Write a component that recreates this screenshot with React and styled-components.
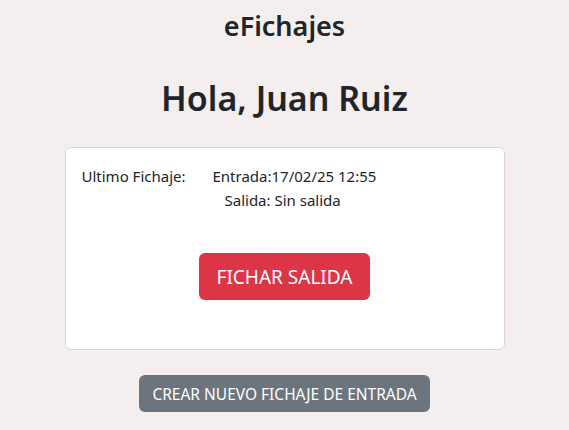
import styled, { createGlobalStyle } from "styled-components";

const GlobalStyle = createGlobalStyle`
  body {
    margin: 0;
    background: #f5eeee;
    font-family: "Noto Sans", "Open Sans", sans-serif;
    color: #212529;
  }
`;

const Page = styled.div`
  display: flex;
  flex-direction: column;
  align-items: center;
  padding-top: 6px;
`;

const Brand = styled.h2`
  margin: 0;
  font-size: 27px;
  font-weight: 600;
  line-height: 40px;
`;

const Greeting = styled.h1`
  margin: 28px 0 0;
  font-size: 34px;
  font-weight: 600;
  line-height: 48px;
`;

const Card = styled.div`
  box-sizing: border-box;
  width: 440px;
  margin-top: 25px;
  padding: 16px 16px 49px;
  background: #fff;
  border: 1px solid #d8d8d8;
  border-radius: 6px;
  display: flex;
  flex-direction: column;
  align-items: center;
`;

const Info = styled.div`
  align-self: stretch;
  display: grid;
  grid-template-columns: 131px auto;
  font-size: 15px;
  line-height: 24px;
`;

const Label = styled.span``;

const Value = styled.span`
  padding-left: ${(p) => p.$indent || 0}px;
`;

const Button = styled.button`
  border: none;
  border-radius: 6px;
  color: #fff;
  font-family: inherit;
  cursor: pointer;
  background: ${(p) => (p.$variant === "danger" ? "#dc3545" : "#6c757d")};
  font-size: ${(p) => (p.$size === "lg" ? "19px" : "15.5px")};
  padding: ${(p) => (p.$size === "lg" ? "0 18px" : "0 13px")};
  height: ${(p) => (p.$size === "lg" ? "47px" : "37px")};
`;

const MainAction = styled(Button)`
  margin-top: 41px;
`;

const SecondaryAction = styled(Button)`
  margin-top: 25px;
`;

export default function App() {
  return (
    <>
      <GlobalStyle />
      <Page>
        <Brand>eFichajes</Brand>
        <Greeting>Hola, Juan Ruiz</Greeting>
        <Card>
          <Info>
            <Label>Ultimo Fichaje:</Label>
            <Value>Entrada:17/02/25 12:55</Value>
            <Label />
            <Value $indent={12}>Salida: Sin salida</Value>
          </Info>
          <MainAction $variant="danger" $size="lg">
            FICHAR SALIDA
          </MainAction>
        </Card>
        <SecondaryAction>CREAR NUEVO FICHAJE DE ENTRADA</SecondaryAction>
      </Page>
    </>
  );
}
